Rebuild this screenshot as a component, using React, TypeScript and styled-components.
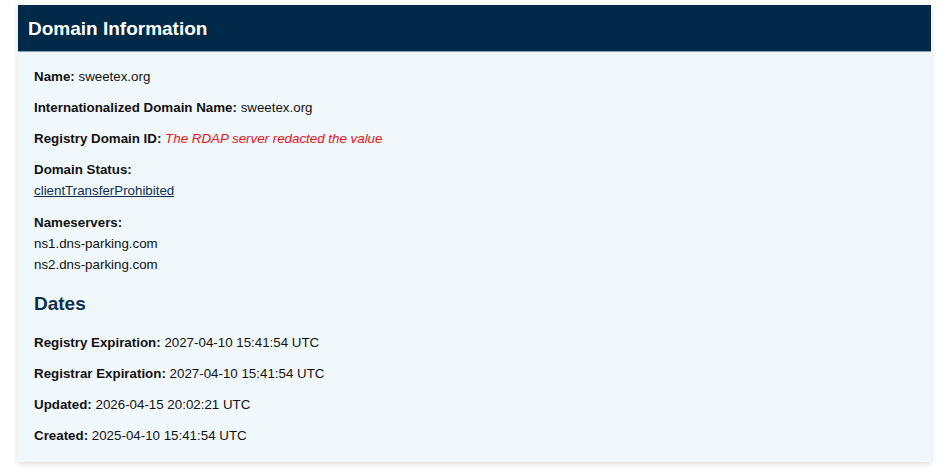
import React from "react";
import styled, { createGlobalStyle } from "styled-components";

const GlobalStyle = createGlobalStyle`
  html, body {
    margin: 0;
    padding: 0;
    background: #ffffff;
    font-family: "Liberation Sans", Arial, sans-serif;
  }
`;

type Field = { label: string; value?: string; redacted?: boolean };

const fields: Field[] = [
  { label: "Name", value: "sweetex.org" },
  { label: "Internationalized Domain Name", value: "sweetex.org" },
  { label: "Registry Domain ID", value: "The RDAP server redacted the value", redacted: true },
];

const dates: Field[] = [
  { label: "Registry Expiration", value: "2027-04-10 15:41:54 UTC" },
  { label: "Registrar Expiration", value: "2027-04-10 15:41:54 UTC" },
  { label: "Updated", value: "2026-04-15 20:02:21 UTC" },
  { label: "Created", value: "2025-04-10 15:41:54 UTC" },
];

const nameservers = ["ns1.dns-parking.com", "ns2.dns-parking.com"];

function App() {
  return (
    <Page>
      <GlobalStyle />
      <Card>
        <Header>Domain Information</Header>
        <Body>
          {fields.map((f) => (
            <Item key={f.label}>
              <Label>{f.label}:</Label>{" "}
              {f.redacted ? <Redacted>{f.value}</Redacted> : f.value}
            </Item>
          ))}
          <Item>
            <Label>Domain Status:</Label>
            <List>
              <StatusLink href="#">clientTransferProhibited</StatusLink>
            </List>
          </Item>
          <Item>
            <Label>Nameservers:</Label>
            <List>
              {nameservers.map((ns) => (
                <div key={ns}>{ns}</div>
              ))}
            </List>
          </Item>
          <Section>Dates</Section>
          {dates.map((f) => (
            <Item key={f.label}>
              <Label>{f.label}:</Label> {f.value}
            </Item>
          ))}
        </Body>
      </Card>
    </Page>
  );
}

const Page = styled.div`
  padding: 5px 19px 10px 18px;
`;

const Card = styled.div`
  background: #f1f8fc;
  box-shadow: 0 2px 6px rgba(0, 0, 0, 0.14);
  overflow: hidden;
`;

const Header = styled.h2`
  margin: 0;
  background: #002a48;
  color: #ffffff;
  font-size: 19px;
  font-weight: bold;
  line-height: 24px;
  padding: 12px 10px 10px;
  border-bottom: 1px solid #8aa0b4;
`;

const Body = styled.div`
  padding: 14px 16px 6px;
  font-size: 13.33px;
  color: #111111;
`;

const Item = styled.div`
  line-height: 21px;
  margin-bottom: 10px;
`;

const Label = styled.strong`
  font-weight: bold;
`;

const Redacted = styled.em`
  color: #e8121b;
  font-style: italic;
`;

const List = styled.div`
  line-height: 21.5px;
`;

const StatusLink = styled.a`
  color: #0d2f4f;
  text-decoration: underline;
`;

const Section = styled.h3`
  margin: 16px 0 16px;
  font-size: 19px;
  line-height: 24px;
  color: #0b2f4e;
  font-weight: bold;
`;

export default App;
